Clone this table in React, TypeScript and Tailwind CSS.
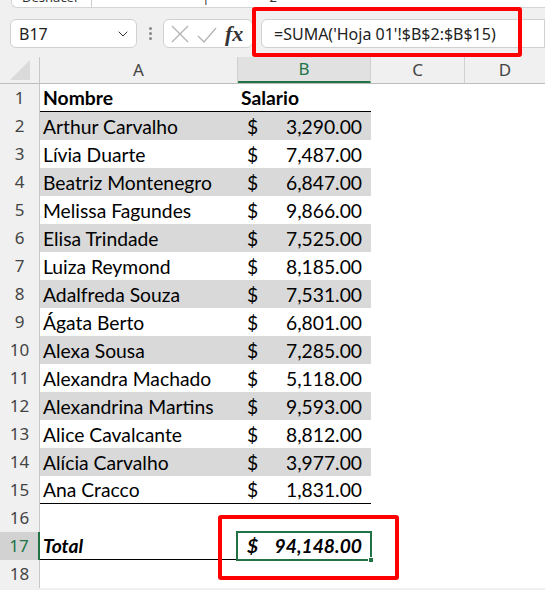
import { ChevronDown } from 'lucide-react';

const rows: [string, string][] = [
    ['Arthur Carvalho', '3,290.00'],
    ['Lívia Duarte', '7,487.00'],
    ['Beatriz Montenegro', '6,847.00'],
    ['Melissa Fagundes', '9,866.00'],
    ['Elisa Trindade', '7,525.00'],
    ['Luiza Reymond', '8,185.00'],
    ['Adalfreda Souza', '7,531.00'],
    ['Ágata Berto', '6,801.00'],
    ['Alexa Sousa', '7,285.00'],
    ['Alexandra Machado', '5,118.00'],
    ['Alexandrina Martins', '9,593.00'],
    ['Alice Cavalcante', '8,812.00'],
    ['Alícia Carvalho', '3,977.00'],
    ['Ana Cracco', '1,831.00'],
];

const RowHead = ({ n, active }: { n: number; active?: boolean }) => (
    <div
        className={
            active
                ? "w-[40px] h-full flex items-center justify-center bg-[#d2d2d2] text-[#217346] border-r-2 border-[#217346] font-['Noto_Sans'] text-[17px]"
                : "w-[40px] h-full flex items-center justify-center bg-[#f0f0f0] text-[#444] border-r border-[#c8c8c8] font-['Noto_Sans'] text-[17px]"
        }
    >
        {n}
    </div>
);

const App = () => {
    return (
        <div className="w-[545px] h-[590px] bg-[#f0f0f0] overflow-hidden relative font-['Lato',sans-serif] text-black">
            {/* ribbon remnant */}
            <div className="h-[8px] ml-[11px] bg-white border-b border-l border-[#d4d4d4] rounded-bl-[6px] overflow-hidden flex text-[13px] text-[#333] font-['Noto_Sans']">
                <span className="-mt-[12px] ml-[10px]">Deshacer</span>
                <span className="-mt-[12px] ml-[12px] border-l border-[#ccc] pl-[110px]">|</span>
                <span className="-mt-[12px] ml-[60px]">2</span>
            </div>

            {/* formula bar */}
            <div className="h-[49px] flex items-start pt-[11px] pl-[10px]">
                <div className="w-[127px] h-[29px] bg-white border border-[#d0d0d0] rounded-[6px] flex items-center justify-between pl-[8px] pr-[5px] font-['Noto_Sans'] text-[16px] text-[#222]">
                    <span>B17</span>
                    <ChevronDown className="w-[16px] h-[16px] text-[#333]" strokeWidth={1.5} />
                </div>
                <div className="w-[26px] h-[29px] flex flex-col items-center justify-center gap-[2px]">
                    <span className="w-[3px] h-[3px] bg-[#888] rounded-full" />
                    <span className="w-[3px] h-[3px] bg-[#888] rounded-full" />
                    <span className="w-[3px] h-[3px] bg-[#888] rounded-full" />
                </div>
                <div className="w-[90px] h-[29px] bg-white border border-[#d0d0d0] rounded-[6px] flex items-center pl-[7px]">
                    <svg width="54" height="20" viewBox="0 0 54 20" fill="none" stroke="#b4b4b4" strokeWidth="1.3">
                        <path d="M1 2 L17 18 M17 2 L1 18" />
                        <path d="M27 12 L33 18 L45 4" />
                    </svg>
                    <span className="font-['Liberation_Serif',serif] italic font-bold text-[22px] text-[#333] leading-none">fx</span>
                </div>
                <div className="flex-1 ml-[8px] h-[29px] bg-white border border-[#d0d0d0] rounded-l-[6px] flex items-center pl-[12px] font-['Noto_Sans'] text-[16px] text-[#222]">
                    =SUMA('Hoja 01'!$B$2:$B$15)
                </div>
            </div>

            {/* column headers */}
            <div className="h-[27px] flex border-b border-[#bdbdbd] font-['Noto_Sans'] text-[17px] text-[#444]">
                <div className="w-[40px] h-full flex items-center justify-center border-r border-[#c8c8c8]">
                    <svg width="20" height="20" viewBox="0 0 20 20">
                        <polygon points="20,0 20,20 0,20" fill="#dadada" />
                    </svg>
                </div>
                <div className="w-[198px] flex items-center justify-center border-r border-[#d0d0d0]">A</div>
                <div className="w-[133px] flex items-center justify-center bg-[#e1e1e1] text-[#217346] border-b-2 border-[#217346] border-r border-r-[#d0d0d0]">B</div>
                <div className="w-[94px] flex items-center justify-center border-r border-[#d0d0d0]">C</div>
                <div className="flex-1 flex items-center justify-center">D</div>
            </div>

            {/* body */}
            <div className="flex flex-col bg-white text-[19.3px]">
                <div className="h-[28px] flex">
                    <RowHead n={1} />
                    <div className="w-[331px] flex font-bold border-b border-black">
                        <div className="w-[198px] pl-[3px] pt-[2px] flex items-center">Nombre</div>
                        <div className="w-[133px] pl-[3px] pt-[2px] flex items-center">Salario</div>
                    </div>
                </div>
                {rows.map(([name, amount], i) => (
                    <div key={name} className="h-[28px] flex">
                        <RowHead n={i + 2} />
                        <div
                            className={
                                (i % 2 === 0 ? 'bg-[#d9d9d9] ' : '') +
                                (i === rows.length - 1 ? 'border-b border-black ' : '') +
                                'w-[331px] flex pt-[2px]'
                            }
                        >
                            <div className="w-[198px] pl-[3px] flex items-center">{name}</div>
                            <div className="w-[133px] pl-[9px] pr-[9px] flex items-center justify-between">
                                <span>$</span>
                                <span>{amount}</span>
                            </div>
                        </div>
                    </div>
                ))}
                <div className="h-[28px] flex">
                    <RowHead n={16} />
                </div>
                <div className="h-[28px] flex">
                    <RowHead n={17} active />
                    <div className="w-[331px] flex font-bold italic border-b border-black pt-[2px]">
                        <div className="w-[198px] pl-[3px] flex items-center">Total</div>
                        <div className="w-[133px] pl-[9px] pr-[9px] flex items-center justify-between">
                            <span>$</span>
                            <span>94,148.00</span>
                        </div>
                    </div>
                </div>
                <div className="h-[28px] flex">
                    <RowHead n={18} />
                </div>
            </div>

            {/* selected cell */}
            <div className="absolute left-[236px] top-[531px] w-[136px] h-[30px] border-2 border-[#217346]" />
            <div className="absolute left-[368px] top-[557px] w-[6px] h-[6px] bg-[#217346] border border-white" />

            {/* annotations */}
            <div className="absolute left-[252px] top-[7px] w-[270px] h-[50px] border-[4px] border-[#ff0000] rounded-[3px]" />
            <div className="absolute left-[218px] top-[515px] w-[181px] h-[65px] border-[4px] border-[#ff0000] rounded-[3px]" />
        </div>
    );
};

export default App;
